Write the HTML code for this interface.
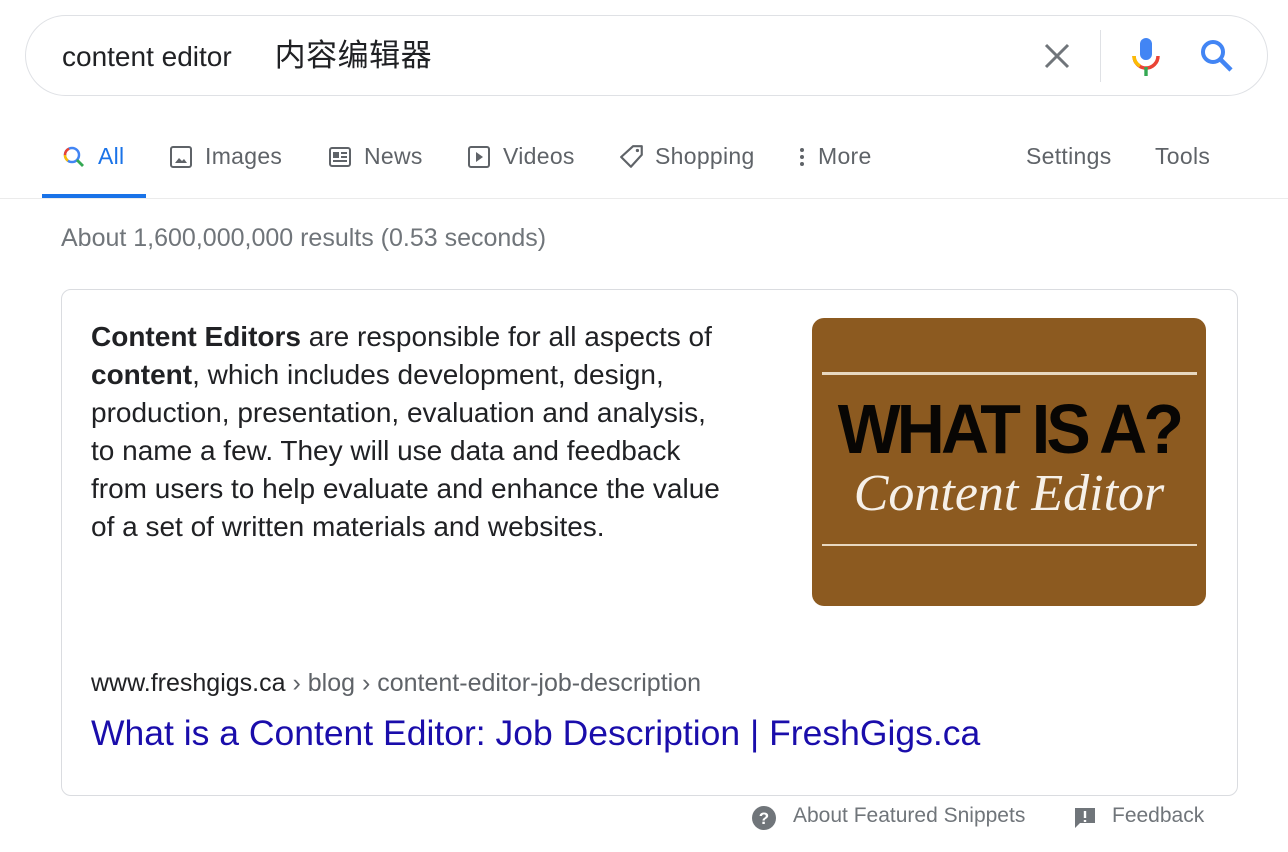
<!DOCTYPE html>
<html><head><meta charset="utf-8"><style>
body{margin:0;width:1288px;height:852px;background:#fff;font-family:"Liberation Sans","Noto Sans CJK SC",sans-serif;position:relative;overflow:hidden}
.a{position:absolute}
.search{left:25px;top:15px;width:1243px;height:81px;border:1px solid #dfe1e5;border-radius:41px;box-sizing:border-box}
.tab{top:143px;font-size:23px;color:#5f6368;display:flex;align-items:center;gap:10px;letter-spacing:.3px}
.snip{left:61px;top:289px;width:1177px;height:507px;border:1px solid #dadce0;border-radius:10px;box-sizing:border-box}
.txt{left:91px;top:318px;width:720px;font-size:28px;line-height:38px;color:#202124;white-space:nowrap}
</style></head><body>
<div class="a search"></div>
<div class="a" style="left:62px;top:38px;color:#202124;white-space:nowrap;line-height:36px"><span style="font-size:28px">content editor</span><span style="font-size:31px;letter-spacing:.5px;margin-left:43px">内容编辑器</span></div>
<svg class="a" style="left:1043px;top:42px" width="28" height="28" viewBox="0 0 28 28"><path d="M3 3L25 25M25 3L3 25" stroke="#70757a" stroke-width="3"/></svg>
<div class="a" style="left:1100px;top:30px;width:1px;height:52px;background:#dfe1e5"></div>
<svg class="a" style="left:1130px;top:36px" width="32" height="42" viewBox="0 0 32 42"><rect x="10" y="2" width="12" height="22" rx="6" fill="#4285f4"/><path d="M4 20a12 12 0 0 0 24 0" stroke="#ea4335" stroke-width="3.5" fill="none"/><path d="M4 20a12 12 0 0 0 6 10" stroke="#fbbc05" stroke-width="3.5" fill="none"/><rect x="14.3" y="31" width="3.4" height="9" fill="#34a853"/></svg>
<svg class="a" style="left:1199px;top:38px" width="36" height="36" viewBox="0 0 36 36"><circle cx="14" cy="14" r="10" stroke="#4285f4" stroke-width="4" fill="none"/><path d="M21 21L32 32" stroke="#4285f4" stroke-width="4.5"/></svg>

<div class="a tab" style="left:62px;color:#1a73e8;gap:12px"><svg width="24" height="24" viewBox="0 0 24 24"><circle cx="10" cy="10" r="7" stroke="#4285f4" stroke-width="2.5" fill="none"/><path d="M3 10a7 7 0 0 1 4-6.3" stroke="#ea4335" stroke-width="2.5" fill="none"/><path d="M3 10a7 7 0 0 0 3 5.7" stroke="#fbbc05" stroke-width="2.5" fill="none"/><path d="M15 15l6 6" stroke="#34a853" stroke-width="2.8"/></svg>All</div>
<div class="a" style="left:42px;top:194px;width:104px;height:4px;background:#1a73e8"></div>
<div class="a tab" style="left:169px;gap:12px"><svg width="24" height="24" viewBox="0 0 24 24"><rect x="2" y="2" width="20" height="20" rx="2" stroke="#5f6368" stroke-width="2" fill="none"/><path d="M6 18l4-5 3 3 2-2 3 4z" fill="#5f6368"/></svg>Images</div>
<div class="a tab" style="left:328px;gap:12px"><svg width="24" height="24" viewBox="0 0 24 24"><rect x="2" y="3" width="20" height="18" rx="2" stroke="#5f6368" stroke-width="2" fill="none"/><rect x="5" y="7" width="6" height="6" fill="#5f6368"/><path d="M13 8h6M13 12h6M5 16h14" stroke="#5f6368" stroke-width="2"/></svg>News</div>
<div class="a tab" style="left:467px;gap:12px"><svg width="24" height="24" viewBox="0 0 24 24"><rect x="2" y="2" width="20" height="20" rx="2" stroke="#5f6368" stroke-width="2" fill="none"/><path d="M9 7l7 5-7 5z" fill="#5f6368"/></svg>Videos</div>
<div class="a tab" style="left:619px"><svg width="26" height="26" viewBox="0 0 24 24"><path d="M13 2h8v8L11 21 2 12z" stroke="#5f6368" stroke-width="2" fill="none" stroke-linejoin="round"/><circle cx="17" cy="6" r="1.5" fill="#5f6368"/></svg>Shopping</div>
<div class="a tab" style="left:796px;gap:10px"><svg width="12" height="24" viewBox="0 0 12 24"><circle cx="6" cy="5" r="2" fill="#5f6368"/><circle cx="6" cy="12" r="2" fill="#5f6368"/><circle cx="6" cy="19" r="2" fill="#5f6368"/></svg>More</div>
<div class="a tab" style="left:1026px">Settings</div>
<div class="a tab" style="left:1155px">Tools</div>
<div class="a" style="left:0;top:198px;width:1288px;height:1px;background:#ebebeb"></div>

<div class="a" style="left:61px;top:224px;font-size:25px;color:#70757a">About 1,600,000,000 results (0.53 seconds)</div>

<div class="a snip"></div>
<div class="a txt"><b>Content Editors</b> are responsible for all aspects of<br><b>content</b>, which includes development, design,<br>production, presentation, evaluation and analysis,<br>to name a few. They will use data and feedback<br>from users to help evaluate and enhance the value<br>of a set of written materials and websites.</div>
<div class="a" style="left:812px;top:318px;width:394px;height:288px;background:#8c5a20;border-radius:12px;overflow:hidden">
 <div class="a" style="left:10px;top:54px;width:375px;height:3px;background:#e8d8c0"></div>
 <div class="a" style="left:0;top:76px;width:394px;text-align:center;font:bold 70px/1 'Liberation Sans Narrow','Liberation Sans',sans-serif;color:#080604;letter-spacing:-4px;transform:scaleX(.95)">WHAT IS A?</div>
 <div class="a" style="left:0;top:150px;width:394px;text-align:center;font:italic 52px/1 'Liberation Serif',serif;color:#f6f0e8">Content Editor</div>
 <div class="a" style="left:10px;top:226px;width:375px;height:2px;background:#e8d8c0"></div>
</div>
<div class="a" style="left:91px;top:669px;font-size:25px;color:#202124">www.freshgigs.ca<span style="color:#5f6368"> › blog › content-editor-job-description</span></div>
<div class="a" style="left:91px;top:713px;font-size:35.5px;color:#1a0dab">What is a Content Editor: Job Description | FreshGigs.ca</div>

<svg class="a" style="left:752px;top:806px" width="24" height="24" viewBox="0 0 24 24"><circle cx="12" cy="12" r="12" fill="#70757a"/><text x="12" y="18" text-anchor="middle" font-size="17" font-weight="bold" fill="#fff" font-family="Liberation Sans">?</text></svg>
<div class="a" style="left:793px;top:804px;font-size:21px;color:#70757a">About Featured Snippets</div>
<svg class="a" style="left:1073px;top:806px" width="24" height="24" viewBox="0 0 24 24"><path d="M2 2h20v15H7l-5 5z" fill="#70757a"/><path d="M12 5v7M12 14v2" stroke="#fff" stroke-width="2.4"/></svg>
<div class="a" style="left:1112px;top:804px;font-size:21px;color:#70757a">Feedback</div>
</body></html>
